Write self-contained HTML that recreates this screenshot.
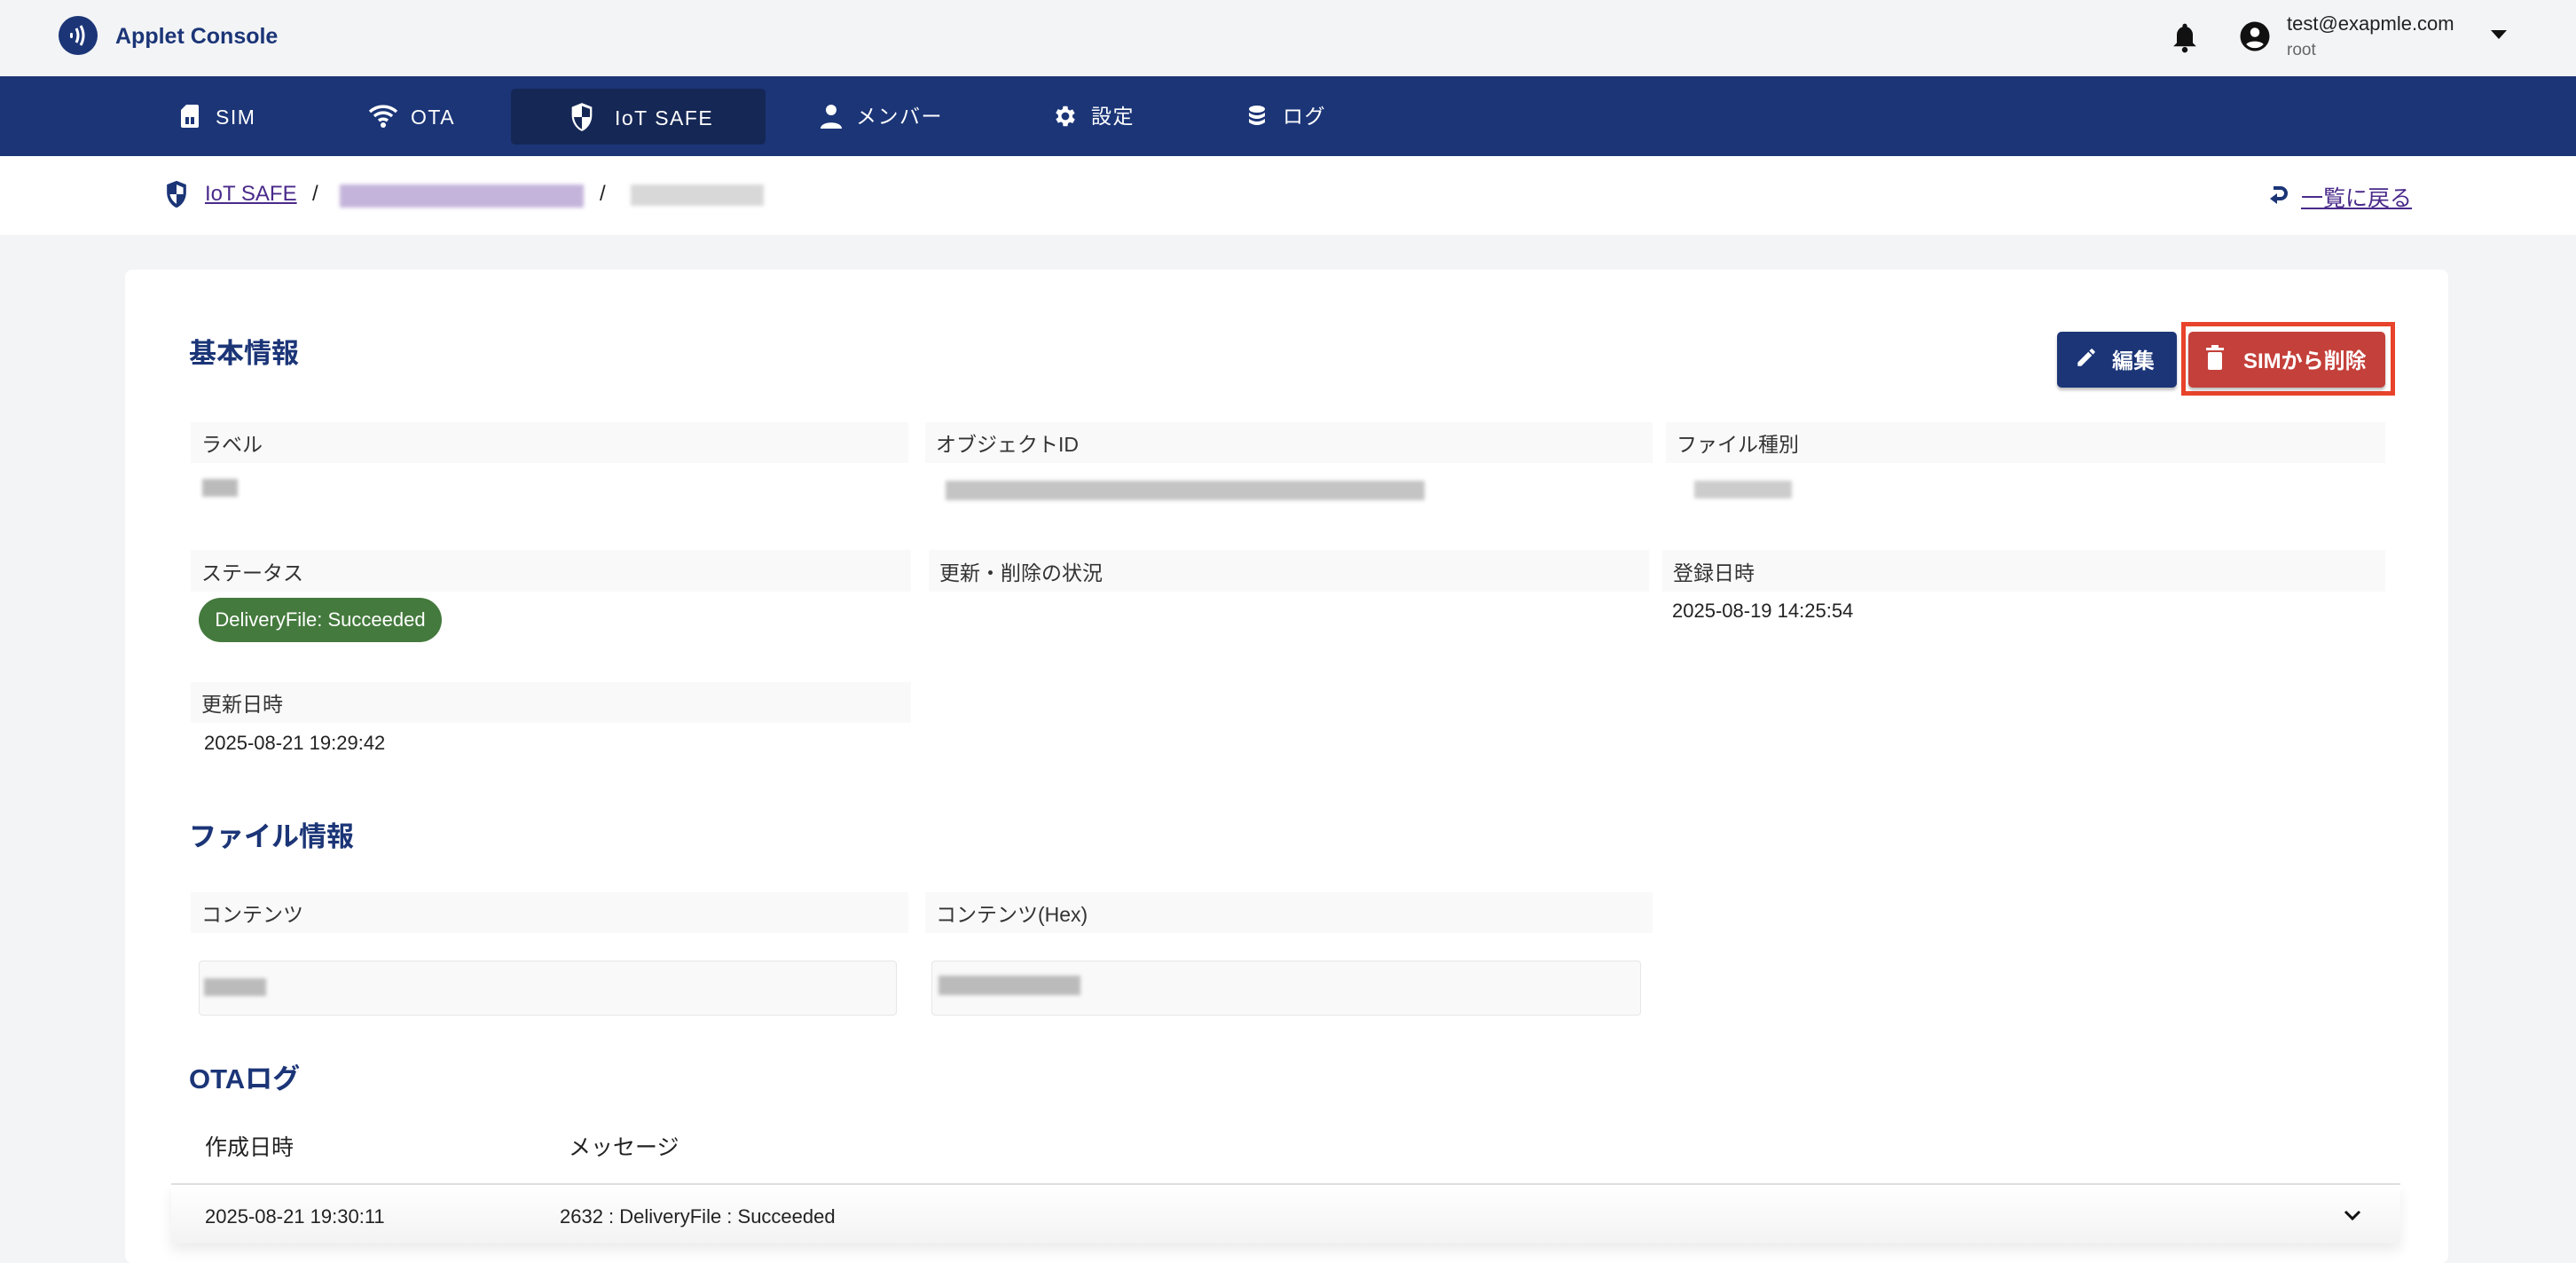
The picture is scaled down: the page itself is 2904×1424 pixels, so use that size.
<!DOCTYPE html>
<html><head><meta charset="utf-8"><style>
*{box-sizing:border-box;margin:0;padding:0}
body{width:2904px;height:1402px;overflow:hidden;background:#f3f4f6;font-family:"Liberation Sans","Noto Sans CJK JP",sans-serif;color:#222;position:relative}
.a{position:absolute;white-space:nowrap}
.nav{position:absolute;left:0;top:86px;width:2904px;height:90px;background:#1b3577}
.nt{color:#fff;font-size:23px;letter-spacing:1.5px;line-height:1}
.lbl{position:absolute;background:#f9f9f9;font-size:23px;color:#333;padding-left:12px;display:flex;align-items:center}
.val{position:absolute;font-size:22px;color:#222;white-space:nowrap}
.blur{position:absolute;filter:blur(2px)}
h2{position:absolute;font-size:31px;color:#1b3577;font-weight:bold;white-space:nowrap}
</style></head><body>
<svg class="a" style="left:66px;top:18px" width="44" height="44" viewBox="0 0 44 44"><circle cx="22" cy="22" r="22" fill="#1b3577"/><rect x="13" y="19" width="3" height="6" rx="1.5" fill="#fff"/><path d="M20 14q4 8 0 16M25 11q6 11 0 22" stroke="#fff" stroke-width="3" fill="none"/></svg>
<div class="a" style="left:130px;top:27px;font-size:25px;font-weight:bold;color:#1b3577">Applet Console</div>
<svg class="a" style="left:2447px;top:24px" width="32" height="36" viewBox="0 0 24 28"><path d="M12 2a2 2 0 0 1 2 2v1a7 7 0 0 1 5 7v7l3 3H2l3-3v-7a7 7 0 0 1 5-7V4a2 2 0 0 1 2-2z" fill="#111"/><circle cx="12" cy="25" r="2.5" fill="#111"/></svg>
<svg class="a" style="left:2524px;top:23px" width="36" height="36" viewBox="0 0 24 24"><circle cx="12" cy="12" r="11" fill="#111"/><circle cx="12" cy="9" r="3.5" fill="#fff"/><path d="M5.5 18c2-3 11-3 13 0a9 9 0 0 1-13 0z" fill="#fff"/></svg>
<div class="a" style="left:2578px;top:14px;font-size:22px;color:#222">test@exapmle.com</div>
<div class="a" style="left:2578px;top:46px;font-size:19px;color:#666">root</div>
<svg class="a" style="left:2808px;top:34px" width="18" height="12"><path d="M0 0h18L9 10z" fill="#111"/></svg>
<div class="nav"></div>
<div class="a" style="left:576px;top:100px;width:287px;height:63px;background:#152755;border-radius:5px"></div>
<svg class="a" style="left:204px;top:118px" width="20" height="26" viewBox="0 0 20 26"><path d="M6 0h12a2 2 0 0 1 2 2v22a2 2 0 0 1-2 2H2a2 2 0 0 1-2-2V6z" fill="#fff"/><rect x="5" y="14" width="10" height="8" fill="#1b3577"/><rect x="9" y="14" width="2" height="8" fill="#fff"/></svg>
<div class="a nt" style="left:243px;top:121px">SIM</div>
<svg class="a" style="left:415px;top:118px" width="34" height="26" viewBox="0 0 34 26"><path d="M2 8a22 22 0 0 1 30 0M7 13a15 15 0 0 1 20 0M12 18a8 8 0 0 1 10 0" stroke="#fff" stroke-width="3.5" fill="none"/><circle cx="17" cy="23" r="3" fill="#fff"/></svg>
<div class="a nt" style="left:463px;top:121px">OTA</div>
<svg class="a" style="left:642px;top:115px" width="28" height="34" viewBox="0 0 24 30"><path d="M12 1L2 5v8c0 8 5 14 10 16 5-2 10-8 10-16V5z" fill="#fff"/><path d="M12 15V4l8 3v8zM12 15v12c-4-2-7-6-8-12z" fill="#152755"/></svg>
<div class="a nt" style="left:693px;top:122px">IoT SAFE</div>
<svg class="a" style="left:925px;top:117px" width="24" height="28" viewBox="0 0 24 28"><circle cx="12" cy="7" r="6" fill="#fff"/><path d="M0 28c0-9 24-9 24 0z" fill="#fff"/></svg>
<div class="a nt" style="left:965px;top:120px">メンバー</div>
<svg class="a" style="left:1186px;top:116px" width="30" height="30" viewBox="0 0 24 24"><path fill="#fff" d="M19.4 13a7.5 7.5 0 0 0 0-2l2.1-1.6-2-3.5-2.5 1a7 7 0 0 0-1.700-1L15 3h-4l-.4 2.6a7 7 0 0 0-1.7 1l-2.5-1-2 3.5L6.6 11a7.5 7.5 0 0 0 0 2l-2.1 1.6 2 3.5 2.5-1a7 7 0 0 0 1.7 1L11 21h4l.4-2.6a7 7 0 0 0 1.7-1l2.5 1 2-3.5zM13 15.5a3.5 3.5 0 1 1 0-7 3.5 3.5 0 0 1 0 7z" transform="translate(-1 0)"/></svg>
<div class="a nt" style="left:1230px;top:120px">設定</div>
<svg class="a" style="left:1406px;top:118px" width="22" height="26" viewBox="0 0 22 26"><ellipse cx="11" cy="5" rx="9" ry="4" fill="#fff"/><path d="M2 9q9 6 18 0v4q-9 6-18 0zM2 16q9 6 18 0v4q-9 6-18 0z" fill="#fff"/></svg>
<div class="a nt" style="left:1446px;top:120px">ログ</div>
<div class="a" style="left:0;top:176px;width:2904px;height:89px;background:#fff"></div>
<svg class="a" style="left:186px;top:202px" width="26" height="34" viewBox="0 0 24 30"><path d="M12 1L2 5v8c0 8 5 14 10 16 5-2 10-8 10-16V5z" fill="#1b3577"/><path d="M12 15V5l7 3v7zM12 15v10c-3-2-6-5-7-10z" fill="#fff"/></svg>
<div class="a" style="left:231px;top:205px;font-size:24px;color:#4a2a8a;text-decoration:underline">IoT SAFE</div>
<div class="a" style="left:352px;top:205px;font-size:24px">/</div>
<div class="blur" style="left:383px;top:208px;width:275px;height:26px;background:#c4b4db"></div>
<div class="a" style="left:676px;top:205px;font-size:24px">/</div>
<div class="blur" style="left:711px;top:208px;width:150px;height:24px;background:#d8d8d8"></div>
<svg class="a" style="left:2557px;top:206px" width="24" height="30" viewBox="0 0 24 30"><path d="M6 6h8a6 6 0 0 1 0 12H9" stroke="#1b3577" stroke-width="4" fill="none"/><path d="M10 12l-8 6 8 6z" fill="#1b3577"/></svg>
<div class="a" style="left:2594px;top:204px;font-size:25px;color:#4a2a8a;text-decoration:underline">一覧に戻る</div>
<div class="a" style="left:141px;top:304px;width:2619px;height:1120px;background:#fff;border-radius:8px"></div>
<h2 style="left:213px;top:373px">基本情報</h2>
<div class="a" style="left:2319px;top:374px;width:135px;height:63px;background:#1b3577;border-radius:5px;box-shadow:0 3px 3px rgba(0,0,0,.25)"></div>
<svg class="a" style="left:2339px;top:390px" width="26" height="26" viewBox="0 0 24 24"><path d="M3 17.25V21h3.75L17.8 9.94l-3.75-3.75zM20.7 7.04a1 1 0 0 0 0-1.41l-2.34-2.34a1 1 0 0 0-1.41 0l-1.83 1.83 3.75 3.75z" fill="#fff"/></svg>
<div class="a" style="left:2381px;top:387px;font-size:24px;font-weight:bold;color:#fff">編集</div>
<div class="a" style="left:2459px;top:363px;width:241px;height:83px;border:5px solid #e8432b"></div>
<div class="a" style="left:2467px;top:374px;width:222px;height:63px;background:#c4403a;border-radius:5px;box-shadow:0 3px 3px rgba(0,0,0,.25)"></div>
<svg class="a" style="left:2487px;top:389px" width="20" height="28" viewBox="0 0 20 28"><rect x="2" y="8" width="16" height="20" rx="2" fill="#fff"/><rect x="0" y="3" width="20" height="3" fill="#fff"/><rect x="6" y="0" width="8" height="4" fill="#fff"/></svg>
<div class="a" style="left:2529px;top:387px;font-size:24px;font-weight:bold;color:#fff">SIMから削除</div>

<div class="lbl" style="left:215px;top:476px;width:809px;height:46px">ラベル</div>
<div class="lbl" style="left:1043px;top:476px;width:820px;height:46px">オブジェクトID</div>
<div class="lbl" style="left:1878px;top:476px;width:811px;height:46px">ファイル種別</div>
<div class="blur" style="left:228px;top:540px;width:40px;height:20px;background:#bbb"></div>
<div class="blur" style="left:1066px;top:542px;width:540px;height:22px;background:#c4c4c4"></div>
<div class="blur" style="left:1910px;top:542px;width:110px;height:20px;background:#ccc"></div>

<div class="lbl" style="left:215px;top:620px;width:812px;height:47px">ステータス</div>
<div class="lbl" style="left:1047px;top:620px;width:812px;height:47px">更新・削除の状況</div>
<div class="lbl" style="left:1874px;top:620px;width:815px;height:47px">登録日時</div>
<div class="a" style="left:224px;top:674px;width:274px;height:50px;background:#447a3d;border-radius:25px;color:#fff;font-size:22px;display:flex;align-items:center;justify-content:center">DeliveryFile: Succeeded</div>
<div class="val" style="left:1885px;top:676px">2025-08-19 14:25:54</div>

<div class="lbl" style="left:215px;top:769px;width:812px;height:46px">更新日時</div>
<div class="val" style="left:230px;top:825px">2025-08-21 19:29:42</div>

<h2 style="left:213px;top:918px">ファイル情報</h2>
<div class="lbl" style="left:215px;top:1006px;width:809px;height:46px">コンテンツ</div>
<div class="lbl" style="left:1043px;top:1006px;width:820px;height:46px">コンテンツ(Hex)</div>
<div class="a" style="left:224px;top:1083px;width:787px;height:62px;background:#f9f9f9;border:1px solid #e6e6e6;border-radius:4px"></div>
<div class="a" style="left:1050px;top:1083px;width:800px;height:62px;background:#f9f9f9;border:1px solid #e6e6e6;border-radius:4px"></div>
<div class="blur" style="left:230px;top:1103px;width:70px;height:20px;background:#bbb"></div>
<div class="blur" style="left:1058px;top:1100px;width:160px;height:22px;background:#bbb"></div>

<h2 style="left:213px;top:1191px">OTAログ</h2>
<div class="a" style="left:231px;top:1274px;font-size:25px">作成日時</div>
<div class="a" style="left:641px;top:1274px;font-size:25px">メッセージ</div>
<div class="a" style="left:193px;top:1334px;width:2513px;height:2px;background:#e0e0e0"></div>
<div class="a" style="left:193px;top:1336px;width:2513px;height:66px;background:linear-gradient(#fff,#f3f3f3);box-shadow:0 8px 14px rgba(0,0,0,.08)"></div>
<div class="val" style="left:231px;top:1359px">2025-08-21 19:30:11</div>
<div class="val" style="left:631px;top:1359px">2632 : DeliveryFile : Succeeded</div>
<svg class="a" style="left:2642px;top:1364px" width="20" height="14"><path d="M2 2l8 8 8-8" stroke="#111" stroke-width="3" fill="none"/></svg>
</body></html>
